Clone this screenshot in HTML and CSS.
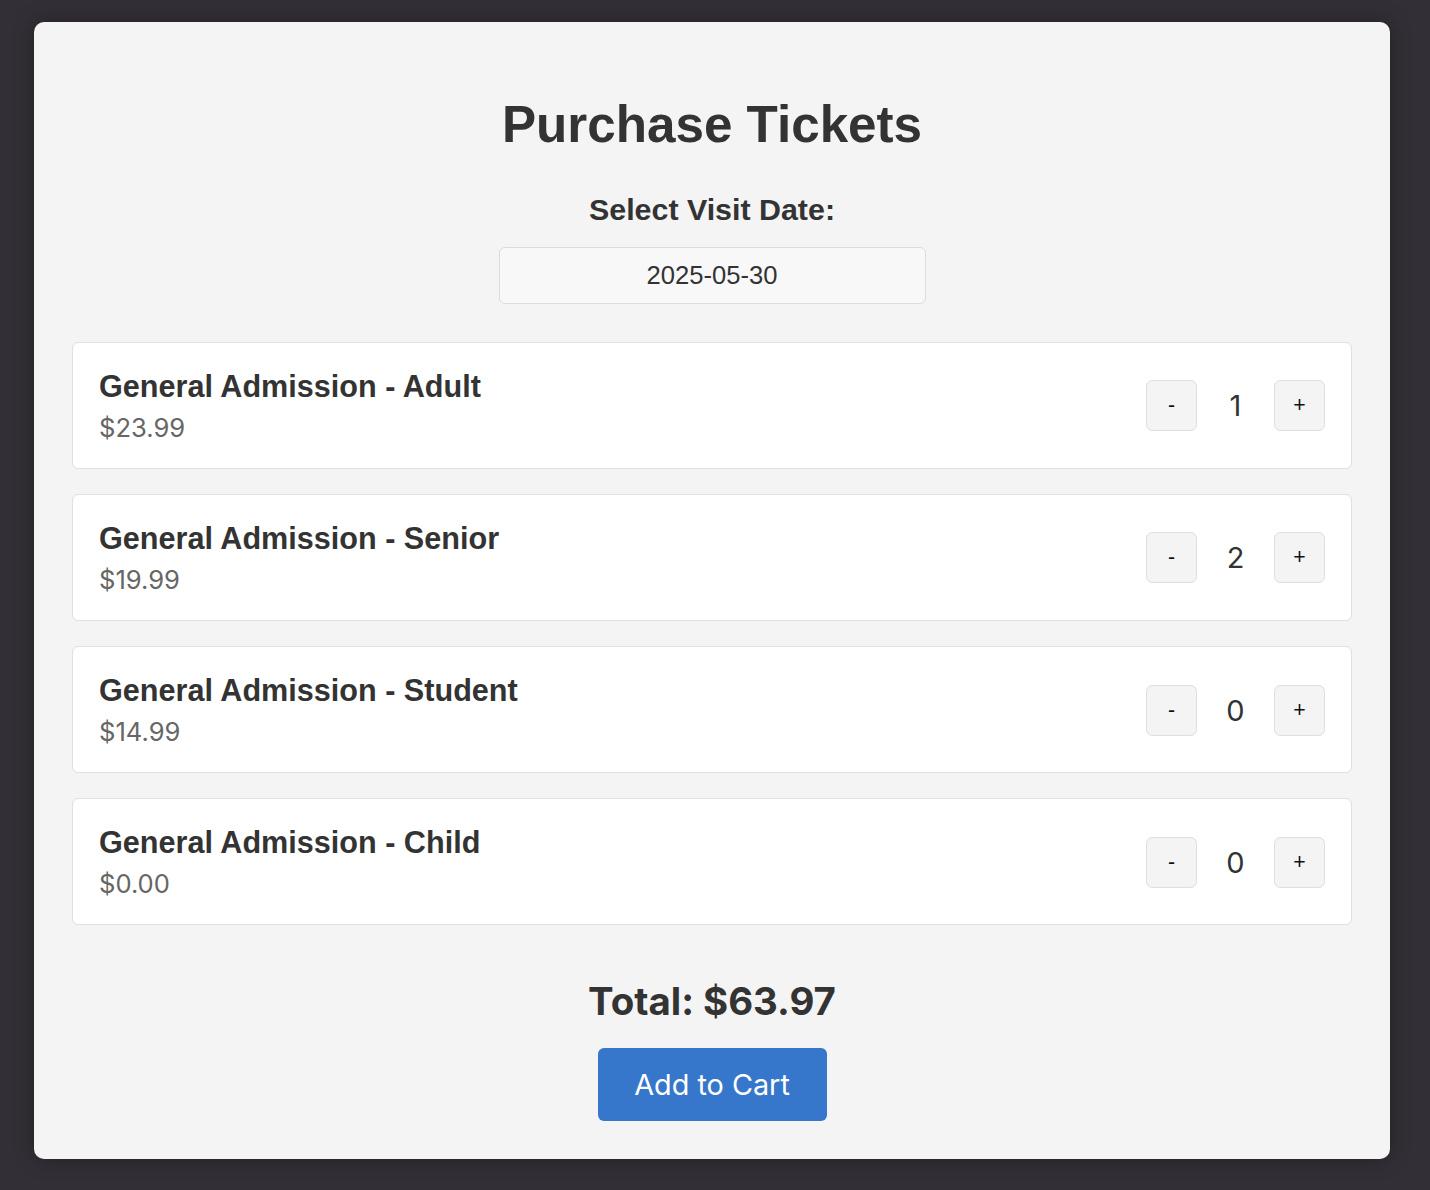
FILE: index.html
```html
<!DOCTYPE html>
<html lang="en">
<head>
<meta charset="utf-8">
<title>Purchase Tickets</title>
<link rel="stylesheet" href="styles.css">
</head>
<body>
<main class="panel">
  <h1 class="title">Purchase Tickets</h1>
  <div class="date-field">
    <label class="date-label" for="visit-date">Select Visit Date:</label>
    <input class="date-input" id="visit-date" type="text" value="2025-05-30" readonly>
  </div>
  <div class="tickets">
    <div class="ticket">
      <div class="ticket-info">
        <h3 class="ticket-name">General Admission - Adult</h3>
        <div class="ticket-price">$23.99</div>
      </div>
      <div class="qty">
        <button class="qty-btn">-</button>
        <span class="qty-value">1</span>
        <button class="qty-btn">+</button>
      </div>
    </div>
    <div class="ticket">
      <div class="ticket-info">
        <h3 class="ticket-name">General Admission - Senior</h3>
        <div class="ticket-price">$19.99</div>
      </div>
      <div class="qty">
        <button class="qty-btn">-</button>
        <span class="qty-value">2</span>
        <button class="qty-btn">+</button>
      </div>
    </div>
    <div class="ticket">
      <div class="ticket-info">
        <h3 class="ticket-name">General Admission - Student</h3>
        <div class="ticket-price">$14.99</div>
      </div>
      <div class="qty">
        <button class="qty-btn">-</button>
        <span class="qty-value">0</span>
        <button class="qty-btn">+</button>
      </div>
    </div>
    <div class="ticket">
      <div class="ticket-info">
        <h3 class="ticket-name">General Admission - Child</h3>
        <div class="ticket-price">$0.00</div>
      </div>
      <div class="qty">
        <button class="qty-btn">-</button>
        <span class="qty-value">0</span>
        <button class="qty-btn">+</button>
      </div>
    </div>
  </div>
  <div class="summary">
    <div class="total">Total: $63.97</div>
    <button class="cart-btn">Add to Cart</button>
  </div>
</main>
</body>
</html>
```

FILE: styles.css
```css
html, body {
  margin: 0;
  padding: 0;
}

body {
  background: #332f36;
  font-family: Inter, "Noto Sans", sans-serif;
  color: #333;
  padding: 22px 40px 31px 34px;
}

.panel {
  background: #f4f4f4;
  border-radius: 10px;
  padding: 38.4px;
  box-shadow: 0 0 20px rgba(0, 0, 0, 0.35);
  display: flow-root;
}

.title {
  font-family: "Liberation Sans", Arial, sans-serif;
  font-weight: 700;
  font-size: 51.2px;
  line-height: normal;
  text-align: center;
  color: #333;
  margin: 34.3px 0 34.3px;
}

.date-field {
  display: flex;
  flex-direction: column;
  align-items: center;
}

.date-label {
  font-family: "Liberation Sans", Arial, sans-serif;
  font-weight: 700;
  font-size: 30.4px;
  line-height: 35px;
  color: #333;
  margin-top: 4px;
  margin-bottom: 20px;
}

.date-input {
  width: 427px;
  height: 57px;
  box-sizing: border-box;
  border: 1.5px solid #dcdcdc;
  border-radius: 6px;
  background: #f8f8f8;
  font-family: "Liberation Sans", Arial, sans-serif;
  font-size: 25.6px;
  color: #333;
  text-align: center;
  padding: 0 12.8px;
  outline: none;
}

.tickets {
  display: flex;
  flex-direction: column;
  gap: 25.2px;
  margin-top: 38.2px;
}

.ticket {
  background: #fff;
  border: 1px solid #e0e0e0;
  border-radius: 6px;
  padding: 25.6px 25.6px 25px 25.6px;
  display: flex;
  align-items: center;
  justify-content: space-between;
}

.ticket-name {
  font-family: "Liberation Sans", Arial, sans-serif;
  font-weight: 700;
  font-size: 30.6px;
  line-height: 35.3px;
  color: #333;
  margin: 0 0 8px;
}

.ticket-price {
  font-size: 25.6px;
  line-height: 31px;
  color: #666;
}

.qty {
  display: flex;
  align-items: center;
}

.qty-btn {
  width: 51px;
  height: 51px;
  box-sizing: border-box;
  border: 1.3px solid #dedede;
  border-radius: 6.4px;
  background: #f4f4f4;
  font-family: "Liberation Sans", Arial, sans-serif;
  font-size: 21.3px;
  color: #111;
  padding: 0;
  display: flex;
  align-items: center;
  justify-content: center;
}

.qty-value {
  width: 77px;
  text-align: center;
  font-size: 29px;
  color: #333;
}

.summary {
  display: flex;
  flex-direction: column;
  align-items: center;
  margin-top: 52.4px;
}

.total {
  font-weight: 700;
  font-size: 38.4px;
  line-height: 46.5px;
  color: #333;
}

.cart-btn {
  margin-top: 24px;
  background: #3677cc;
  color: #fff;
  border: none;
  border-radius: 6px;
  font-family: Inter, "Noto Sans", sans-serif;
  font-size: 28.8px;
  line-height: 35px;
  height: 72.4px;
  width: 229px;
  padding: 0;
  white-space: nowrap;
}
```
